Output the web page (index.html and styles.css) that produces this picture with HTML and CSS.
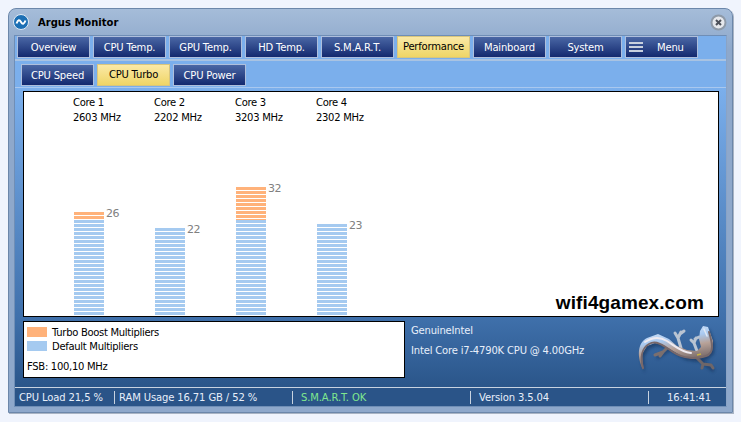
FILE: index.html
```html
<!DOCTYPE html>
<html lang="en">
<head>
<meta charset="utf-8">
<title>Argus Monitor</title>
<link rel="stylesheet" href="styles.css">
</head>
<body>
<div class="window">
  <header class="titlebar">
    <svg class="app-icon" width="16" height="16" viewBox="0 0 16 16"><circle cx="8" cy="8" r="7.500" fill="#1c6fb4" stroke="#dfeaf5"/><path d="M3.500 9.500C5 5.500 6.500 5.500 8 8s3 2.500 4.500-1.500" fill="none" stroke="#fff" stroke-width="2"/></svg>
    <span class="title">Argus Monitor</span>
    <svg class="close" width="17" height="17" viewBox="0 0 17 17"><circle cx="8.500" cy="8.500" r="7" fill="#e6e8ec" stroke="#8e9aa8" stroke-width="2"/><path d="M6 6l5 5M11 6l-5 5" stroke="#4c5058" stroke-width="2"/></svg>
  </header>
  <div class="client">
    <nav class="tabs">
      <div class="tab">Overview</div>
      <div class="tab">CPU Temp.</div>
      <div class="tab">GPU Temp.</div>
      <div class="tab">HD Temp.</div>
      <div class="tab">S.M.A.R.T.</div>
      <div class="tab active">Performance</div>
      <div class="tab">Mainboard</div>
      <div class="tab">System</div>
      <div class="tab menu-tab"><span class="burger"></span><span>Menu</span></div>
    </nav>
    <nav class="subtabs">
      <div class="tab">CPU Speed</div>
      <div class="tab active">CPU Turbo</div>
      <div class="tab">CPU Power</div>
    </nav>
    <main class="content">
      <section class="graph">
        <div class="core">
          <div class="core-label">Core 1<br>2603 MHz</div>
          <div class="bar-wrap"><div class="bar"><div class="turbo" style="height:8px"></div><div class="base" style="height:96px"></div></div><span class="val">26</span></div>
        </div>
        <div class="core">
          <div class="core-label">Core 2<br>2202 MHz</div>
          <div class="bar-wrap"><div class="bar"><div class="base" style="height:88px"></div></div><span class="val">22</span></div>
        </div>
        <div class="core">
          <div class="core-label">Core 3<br>3203 MHz</div>
          <div class="bar-wrap"><div class="bar"><div class="turbo" style="height:33px"></div><div class="base" style="height:96px"></div></div><span class="val">32</span></div>
        </div>
        <div class="core">
          <div class="core-label">Core 4<br>2302 MHz</div>
          <div class="bar-wrap"><div class="bar"><div class="base" style="height:92px"></div></div><span class="val">23</span></div>
        </div>
        <div class="watermark">wifi4gamex.com</div>
      </section>
      <section class="bottom">
        <div class="legend">
          <div class="legend-row"><span class="swatch orange"></span>Turbo Boost Multipliers</div>
          <div class="legend-row"><span class="swatch blue"></span>Default Multipliers</div>
          <div class="fsb">FSB: 100,10 MHz</div>
        </div>
        <div class="cpu-info">
          <div>GenuineIntel</div>
          <div class="cpu-name">Intel Core i7-4790K CPU @ 4.00GHz</div>
        </div>
        <svg class="lizard" width="95" height="60" viewBox="0 0 95 60">
          <defs>
            <linearGradient id="chrome" x1="0" y1="0" x2="0.3" y2="1">
              <stop offset="0" stop-color="#eaf3ff"/>
              <stop offset="0.4" stop-color="#a9c9f0"/>
              <stop offset="0.6" stop-color="#b8a298"/>
              <stop offset="1" stop-color="#5f5558"/>
            </linearGradient>
            <filter id="blur" x="-20%" y="-20%" width="140%" height="140%"><feGaussianBlur stdDeviation="1.800"/></filter>
          </defs>
          <g transform="translate(2,3)" filter="url(#blur)" opacity="0.5">
            <path fill="#10264a" d="M18 51C12 38 12 24 22 19L33 15 44 20 52 27 62 31 72 32 76 28 74 20 75 12 78 7 83 8 88 22 87 32 80 38 70 40 58 38 48 32 38 26 30 24 22 27 17 35Z"/>
            <path fill="none" stroke="#10264a" stroke-width="3" d="M42 28l-12 8M73 38l14 11"/>
          </g>
          <g fill="none" stroke-linecap="round" stroke-linejoin="round" stroke-width="3">
            <path d="M44 27l-6 6-8 3M38 33l-3 4" stroke="#7b6f6e"/>
            <path d="M56 29l-3-10 3-6M53 19l-3-5M55 15l4-3" stroke="#b9c4d2"/>
            <path d="M72 32l-3-8 2-5M69 24l-3-3M70 20l4-2" stroke="#b9c4d2"/>
            <path d="M72 39l6 6 8 1M78 45l-1 4M86 46l2 3" stroke="#6f6668"/>
          </g>
          <path fill="url(#chrome)" d="M18 51C12 38 12 24 22 19L33 15 44 20 52 27 62 31 72 32 76 28 74 20 75 12 78 7 83 8 88 22 87 32 80 38 70 40 58 38 48 32 38 26 30 24 22 27 17 35Z"/>
          <path fill="none" stroke="#efeaf0" stroke-width="2" stroke-linecap="round" d="M20 23C26 19 34 17 42 22s14 11 24 12"/>
          <path fill="none" stroke="#78686a" stroke-width="2" stroke-linecap="round" d="M18 49C15 38 17 29 24 25s14 1 24 8 24 7 33 4 6-14 3-24"/>
          <path fill="none" stroke="#dfe8f4" stroke-width="1.500" stroke-linecap="round" d="M79 10l3 7"/>
          <path fill="none" stroke="#c9b23f" stroke-width="1.500" d="M72 36l4-1"/>
        </svg>
      </section>
      <footer class="status">
        <div class="cell c1">CPU Load 21,5 %</div>
        <div class="cell c2">RAM Usage 16,71 GB / 52 %</div>
        <div class="cell c3 ok">S.M.A.R.T. OK</div>
        <div class="cell c4">Version 3.5.04</div>
        <div class="cell c5">16:41:41</div>
      </footer>
    </main>
  </div>
</div>
</body>
</html>
```
FILE: styles.css
```css
* { box-sizing: border-box; }
html, body { margin: 0; height: 100%; }
body {
  background: #f0f4fd;
  padding: 8px;
  font-family: "DejaVu Sans", sans-serif;
  font-size: 10px;
  letter-spacing: -0.3px;
  color: #000;
  overflow: hidden;
}
.window {
  width: 725px;
  height: 405px;
  background: linear-gradient(#a5bcd9, #8ea8cb 40px, #8ea8cb);
  border: 1px solid #6c87aa;
  border-top-left-radius: 8px;
  border-top-right-radius: 8px;
  padding: 0 5px 5px 5px;
  display: flex;
  flex-direction: column;
  box-shadow: 1px 1px 0 #a9b4c4;
}
.titlebar {
  height: 26px;
  flex: none;
  display: flex;
  align-items: center;
  margin-left: -1px;
}
.app-icon { flex: none; margin-right: 9px; }
.title { font-weight: bold; font-size: 10px; letter-spacing: 0; }
.close { margin-left: auto; margin-right: 0; }
.client {
  flex: 1;
  display: flex;
  flex-direction: column;
  background: #7bafec;
  border: 1px solid #6f8eb6;
  border-right-color: #8aa3c5;
}
.tabs {
  display: flex;
  gap: 3px;
  padding: 0 2px;
  height: 25px;
  flex: none;
  border-bottom: 2px solid #a9c3e2;
}
.subtabs {
  display: flex;
  gap: 3px;
  padding: 3px 6px 0;
  height: 27px;
  flex: none;
  border-bottom: 1px solid #a9c8ef;
  background: #7bafec;
}
.tab {
  width: 73px;
  height: 22px;
  flex: none;
  display: flex;
  align-items: center;
  justify-content: center;
  color: #fff;
  letter-spacing: -0.2px;
  background: linear-gradient(#4a67a5, #13296f);
  border: 1px solid #aebfdc;
}
.tab.active {
  color: #000;
  background: linear-gradient(#fbe9a6, #efd566);
  border-color: #d9c67e;
  padding-bottom: 2px;
}
.menu-tab { justify-content: flex-start; padding-left: 3px; gap: 14px; }
.burger {
  width: 14px;
  height: 10px;
  border-top: 2px solid #c8d0de;
  border-bottom: 2px solid #c8d0de;
  position: relative;
}
.burger::after {
  content: "";
  position: absolute;
  left: 0;
  right: 0;
  top: 2px;
  height: 2px;
  background: #c8d0de;
}
.content {
  flex: 1;
  display: flex;
  flex-direction: column;
  padding-top: 3px;
  background: linear-gradient(#7bafec, #3f70ab 230px, #2a5589 300px);
}
.graph {
  margin: 0 8px;
  width: 696px;
  height: 226px;
  flex: none;
  background: #fff;
  border: 1px solid #000;
  display: flex;
  padding-left: 49px;
  position: relative;
}
.core {
  width: 81px;
  flex: none;
  display: flex;
  flex-direction: column;
  justify-content: space-between;
}
.core-label { padding-top: 3px; line-height: 15px; }
.bar-wrap { display: flex; align-items: flex-start; position: relative; margin-left: 1px; }
.bar { width: 30px; display: flex; flex-direction: column; }
.turbo { background: repeating-linear-gradient(#ffb27a 0 3px, #fff 3px 4px); }
.base { background: repeating-linear-gradient(#a5caf0 0 3px, #fff 3px 4px); }
.val { color: #808080; font-size: 11px; position: absolute; left: 32px; top: -5px; letter-spacing: -0.4px; }
.watermark {
  position: absolute;
  right: 14px;
  bottom: 2px;
  font-family: "Liberation Sans", sans-serif;
  font-weight: bold;
  font-size: 19px;
  letter-spacing: 0.1px;
}
.bottom {
  flex: 1;
  display: flex;
  padding: 4px 8px 0;
  position: relative;
}
.legend {
  width: 382px;
  height: 57px;
  background: #fff;
  border: 1px solid #000;
  padding: 3px 3px;
  flex: none;
}
.legend-row { display: flex; align-items: center; height: 14px; }
.swatch { width: 20px; height: 10px; margin-right: 5px; }
.orange { background: #ffb27a; }
.blue { background: #a5caf0; }
.fsb { margin-top: 8px; }
.cpu-info { color: #e8effa; padding: 2px 0 0 6px; line-height: 15px; letter-spacing: -0.18px; }
.cpu-name { margin-top: 5px; }
.lizard { position: absolute; right: 6px; top: 2px; }
.status {
  height: 19px;
  flex: none;
  display: flex;
  align-items: center;
  background: #2a5488;
  border-top: 1px solid #c8d3e0;
  color: #e8effa;
  letter-spacing: -0.12px;
}
.cell {
  height: 13px;
  line-height: 14px;
  flex: none;
  padding-left: 4px;
  border-right: 1px solid #c8d3e0;
}
.c1 { width: 100px; }
.c2 { width: 178px; }
.c3 { width: 178px; padding-left: 8px; }
.c4 { width: 178px; padding-left: 8px; }
.c5 { flex: 1; border-right: 0; text-align: right; padding-right: 15px; }
.ok { color: #7fe88f; }
```
